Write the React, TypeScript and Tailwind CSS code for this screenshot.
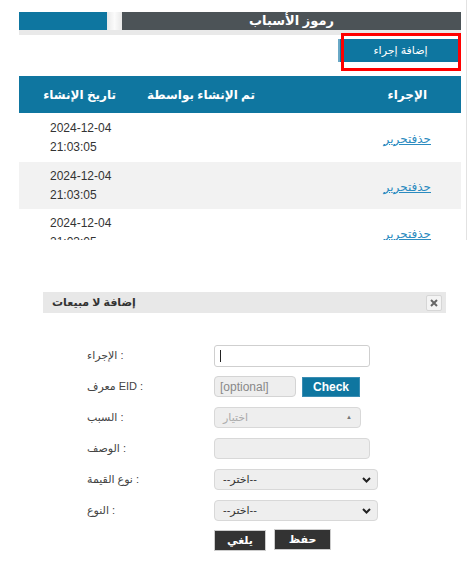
import React from "react";

function Chevron() {
  return (
    <svg width="9" height="6" viewBox="0 0 9 6" className="block">
      <path d="M1 1 L4.5 4.5 L8 1" fill="none" stroke="#222" strokeWidth="2" />
    </svg>
  );
}

function Row({
  label,
  children,
}: {
  label: string;
  children: React.ReactNode;
}) {
  return (
    <div className="flex items-center h-[31px]">
      <div dir="ltr" className="w-[171px] shrink-0 pl-[44px] text-[11px] text-[#444]">
        {label}
      </div>
      {children}
    </div>
  );
}

export default function App() {
  const rows = [
    { h: "h-[49px]", bg: "bg-white" },
    { h: "h-[47px]", bg: "bg-[#f2f2f2]" },
    { h: "h-[47px]", bg: "bg-white" },
  ];
  return (
    <div className="w-[476px] h-[567px] bg-white font-['Liberation_Sans','DejaVu_Sans',sans-serif] overflow-hidden">
      {/* Top panel */}
      <div className="w-[467px] h-[240px] border-r border-[#e2e2e2] pt-[12px] pl-[19px] overflow-hidden">
        <div className="w-[442px]">
          <div className="flex h-[23px] bg-[#e9e9e9]">
            <div className="w-[88px] h-[18px] bg-[#0e76a0]" />
            <div className="w-[15px] h-[18px] bg-linear-to-r from-[#e9e9e9] via-[#fbfbfb] to-[#e9e9e9]" />
            <div className="w-[339px] h-[18px] bg-[#4c5357] text-white font-bold text-[13px] flex items-center justify-center">
              رموز الأسباب
            </div>
          </div>
          <div className="flex justify-end mt-[4px]">
            <div className="relative">
              <div className="w-[123px] h-[23px] bg-[#0e76a0] border-l-2 border-[#6aa8c6] text-white text-[11px] flex items-center justify-center">
                إضافة إجراء
              </div>
              <span className="absolute left-[3px] -top-[6px] w-[120px] h-[38px] border-[3px] border-[#ff0000]" />
            </div>
          </div>
          <div className="mt-[14px]">
            <div className="grid grid-cols-[131px_139px_172px] h-[37px] bg-[#0f76a0] items-center text-white font-bold text-[12px]">
              <div dir="rtl" className="text-right pr-[34px]">تاريخ الإنشاء</div>
              <div dir="rtl" className="text-right pr-[34px] whitespace-nowrap">تم الإنشاء بواسطة</div>
              <div dir="rtl" className="text-right pr-[34px]">الإجراء</div>
            </div>
            {rows.map((r, i) => (
              <div
                key={i}
                className={`grid grid-cols-[131px_139px_172px] items-center ${r.h} ${r.bg}`}
              >
                <div className="pl-[31px] text-[12px] leading-[19px] text-[#333]">
                  2024-12-04
                  <br />
                  21:03:05
                </div>
                <div />
                <div className="text-right pr-[30px]">
                  <a className="underline text-[#2b8bc0] text-[12px] cursor-pointer">
                    حذفتحرير
                  </a>
                </div>
              </div>
            ))}
          </div>
        </div>
      </div>

      {/* Modal */}
      <div className="mt-[52px] ml-[43px] w-[403px]">
        <div className="h-[21px] bg-[#e8e8e8] flex items-center justify-between pl-[9px] pr-[4px]">
          <div className="text-[11px] font-bold text-[#333]">إضافة لا مبيعات</div>
          <div className="w-[16px] h-[16px] bg-[#f4f4f4] border border-[#d6d6d6] rounded-[2px] flex items-center justify-center">
            <svg width="8" height="8" viewBox="0 0 8 8">
              <path d="M1 1 L7 7 M7 1 L1 7" stroke="#666" strokeWidth="2" />
            </svg>
          </div>
        </div>
        <div className="pt-[27px]">
          <Row label="الإجراء :">
            <div className="w-[156px] h-[22px] bg-white border border-[#cfcfcf] rounded-[3px] flex items-center pl-[5px]">
              <span className="w-[1px] h-[12px] bg-[#222]" />
            </div>
          </Row>
          <Row label="معرف EID :">
            <div className="w-[82px] h-[21px] bg-[#eeeeee] border border-[#d4d4d4] rounded-[4px] flex items-center pl-[5px] text-[12px] text-[#888]">
              [optional]
            </div>
            <div className="ml-[6px] w-[58px] h-[20px] bg-[#0f76a0] text-white font-bold text-[12px] flex items-center justify-center border border-[#3b8db3]">
              Check
            </div>
          </Row>
          <Row label="السبب :">
            <div className="w-[147px] h-[21px] bg-[#eeeeee] border border-[#d8d8d8] rounded-[4px] flex items-center justify-between pl-[8px] pr-[8px]">
              <span className="text-[11px] text-[#aaa]">اختيار</span>
              <span className="text-[6px] text-[#777]">▲</span>
            </div>
          </Row>
          <Row label="الوصف :">
            <div className="w-[156px] h-[21px] bg-[#eeeeee] border border-[#d8d8d8] rounded-[4px]" />
          </Row>
          <Row label="نوع القيمة :">
            <div className="w-[164px] h-[21px] bg-[#eeeeee] border border-[#d8d8d8] rounded-[4px] flex items-center justify-between pl-[8px] pr-[6px]">
              <span className="text-[11px] text-[#333]">--اختر--</span>
              <Chevron />
            </div>
          </Row>
          <Row label="النوع :">
            <div className="w-[164px] h-[21px] bg-[#eeeeee] border border-[#d8d8d8] rounded-[4px] flex items-center justify-between pl-[8px] pr-[6px]">
              <span className="text-[11px] text-[#333]">--اختر--</span>
              <Chevron />
            </div>
          </Row>
          <div className="flex items-start pl-[171px] mt-[3px]">
            <div className="w-[52px] h-[21px] mt-[1px] bg-[#333] border border-[#ccc] text-white font-bold text-[11px] flex items-center justify-center">
              يلغي
            </div>
            <div className="ml-[8px] w-[57px] h-[21px] bg-[#333] border border-[#ccc] text-white font-bold text-[11px] flex items-center justify-center">
              حفظ
            </div>
          </div>
        </div>
      </div>
    </div>
  );
}
